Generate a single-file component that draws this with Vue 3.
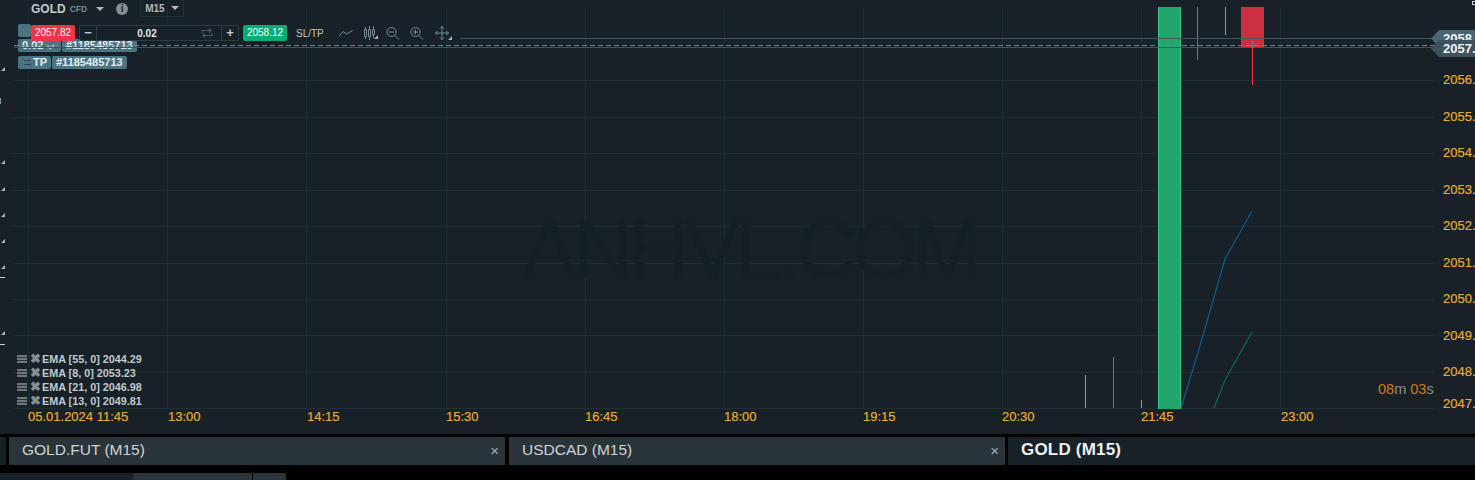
<template>
  <div class="page">
    <div class="chart">
      <svg class="plot" width="1475" height="434" viewBox="0 0 1475 434">
        <g class="grid">
          <line v-for="x in gridX" :key="x" :x1="x + 0.5" y1="7" :x2="x + 0.5" y2="408" />
          <line v-for="y in gridY" :key="y" x1="12" :y1="y + 0.5" x2="1434" :y2="y + 0.5" />
        </g>
        <rect x="1158" y="7" width="23" height="402" fill="#24a56d" />
        <path d="M1158.5 7V409M1180.5 7V409" stroke="#2dcb85" fill="none" />
        <rect x="1241" y="7" width="23" height="41" fill="#cc3040" />
        <path d="M1197.5 7V60" stroke="#e5414f" />
        <path d="M1225.5 7V35" stroke="#3cc88c" />
        <path d="M1252.5 48V85" stroke="#f0313f" />
        <path d="M1085.5 375V408" stroke="#3cc88c" />
        <path d="M1113.5 357V408" stroke="#e5414f" />
        <path d="M1141.5 400V408" stroke="#3cc88c" />
        <path d="M1181 408L1197 356L1225 259L1252 211" stroke="#0f5b96" stroke-width="1.2" fill="none" />
        <path d="M1214 408L1225 380L1252 332" stroke="#0d6b50" stroke-width="1.2" fill="none" />
        <path class="tri" d="M5 67v4h-4zM5 160v4h-4zM5 187v4h-4zM5 213v4h-4zM5 239v4h-4zM5 265v4h-4zM5 331v4h-4zM378 35v4h-4zM452 36v4h-4z" />
        <path class="tick" d="M0 277.500h5M0 344.500h5" />
        <rect x="0" y="98" width="1" height="6" fill="#7f98a3" />
        <rect x="1472.500" y="1.500" width="3" height="3" fill="none" stroke="#c9d0d4" />
      </svg>

      <div class="order-tags">
        <div class="tag-row first-row">
          <span class="tag stub"></span>
        </div>
        <div class="tag-row">
          <span class="tag lots">0.02 ⌵</span><span class="tag">#1185485713</span>
        </div>
        <div class="tag-row last-row">
          <span class="tag tp"><i class="lines"></i>TP</span><span class="tag">#1185485713</span>
        </div>
      </div>

      <svg class="levels" width="1475" height="60" viewBox="0 0 1475 60">
        <path d="M460 38.500H1434M14 47.500H1434" stroke="#43565f" fill="none" />
        <path d="M14 45.500H1434" stroke="#71838c" stroke-dasharray="5 3" fill="none" />
        <rect x="1251" y="41" width="3" height="7" fill="#5b7683" />
      </svg>

      <div class="toolbar">
        <span class="symbol">GOLD</span>
        <span class="cfd">CFD</span>
        <span class="caret"></span>
        <span class="info">i</span>
        <span class="period">M15 <span class="caret small"></span></span>
      </div>

      <div class="trade-row">
        <span class="price sell">2057.82</span>
        <div class="lot">
          <span class="lot-btn">−</span>
          <span class="lot-value">0.02</span>
          <svg class="swap" width="12" height="10" viewBox="0 0 12 10">
            <path d="M1 5V2.500h9M8 .500l2 2-2 2M11 5v2.500H2M4 5.500l-2 2 2 2" />
          </svg>
          <span class="lot-btn plus">+</span>
        </div>
        <span class="price buy">2058.12</span>
        <span class="sltp">SL/TP</span>
        <div class="tools">
          <svg width="14" height="9" viewBox="0 0 14 9"><path d="M0 7.500L4 2.500L7.500 5L13.500 1.500" /></svg>
          <svg width="13" height="14" viewBox="0 0 13 14"><path d="M2.500 1v2M2.500 11v2M6.500 0v3M6.500 11v3M10.500 0v3M10.500 9v3M1.500 3.500h2v7h-2zM5.500 3.500h2v7h-2zM9.500 3.500h2v5h-2z" /></svg>
          <svg width="14" height="13" viewBox="0 0 14 13"><circle cx="5.500" cy="5" r="4.500" /><path d="M3 5h5M9 8.500L13 12.500" /></svg>
          <svg width="14" height="13" viewBox="0 0 14 13"><circle cx="5.500" cy="5" r="4.500" /><path d="M3 5h5M5.500 2.500v5M9 8.500L13 12.500" /></svg>
          <svg class="move" width="14" height="14" viewBox="0 0 14 14"><path d="M7 .500v13M.500 7h13M5 2.500L7 .500 9 2.500M5 11.500L7 13.500 9 11.500M2.500 5L.500 7 2.500 9M11.500 5L13.500 7 11.500 9" /></svg>
        </div>
      </div>

      <div class="legend">
        <div v-for="e in emas" :key="e" class="legend-row">
          <i class="bars"></i><b class="cross">✖</b><span>{{ e }}</span>
        </div>
      </div>

      <div class="wm">ANHVL.COM</div>

      <div class="price-axis">
        <span v-for="p in axisPrices" :key="p.t" class="axis-label" :style="{ top: p.y + 'px' }">{{ p.t }}</span>
      </div>
      <div class="flag back"><span>2058.</span></div>
      <div class="flag"><span>2057.</span></div>

      <div class="time-axis">
        <span v-for="t in axisTimes" :key="t.t" class="time-label" :style="{ left: t.x + 'px' }">{{ t.t }}</span>
      </div>

      <div class="countdown"><em>08</em>m <em>03</em>s</div>
    </div>

    <div class="tabs">
      <div class="tab-stub"></div>
      <div class="tab first">GOLD.FUT (M15)<span class="close">×</span></div>
      <div class="tab second">USDCAD (M15)<span class="close">×</span></div>
      <div class="tab active">GOLD (M15)</div>
    </div>

    <div class="bottom">
      <div class="b-one"></div>
      <div class="b-two"></div>
      <div class="b-three"></div>
    </div>
  </div>
</template>

<script setup>
const gridX = [28, 167, 306, 446, 585, 724, 863, 1002, 1141, 1280]
const gridY = [80, 117, 153, 190, 226, 263, 299, 335, 372, 408]

const axisPrices = [
  { t: '2056.', y: 73 },
  { t: '2055.', y: 110 },
  { t: '2054.', y: 146 },
  { t: '2053.', y: 183 },
  { t: '2052.', y: 219 },
  { t: '2051.', y: 256 },
  { t: '2050.', y: 292 },
  { t: '2049.', y: 329 },
  { t: '2048.', y: 365 },
  { t: '2047.', y: 397 }
]

const axisTimes = [
  { t: '05.01.2024 11:45', x: 28 },
  { t: '13:00', x: 168 },
  { t: '14:15', x: 307 },
  { t: '15:30', x: 446 },
  { t: '16:45', x: 585 },
  { t: '18:00', x: 724 },
  { t: '19:15', x: 863 },
  { t: '20:30', x: 1002 },
  { t: '21:45', x: 1141 },
  { t: '23:00', x: 1281 }
]

const emas = [
  'EMA [55, 0] 2044.29',
  'EMA [8, 0] 2053.23',
  'EMA [21, 0] 2046.98',
  'EMA [13, 0] 2049.81'
]
</script>

<style>
html, body {
  margin: 0;
  background: #000;
  overflow: hidden;
}
</style>

<style scoped>
.page {
  width: 1475px;
  height: 480px;
  background: #000;
  font-family: "Liberation Sans", Arial, sans-serif;
  display: flex;
  flex-direction: column;
  overflow: hidden;
}

.chart {
  position: relative;
  height: 434px;
  background: #172127;
  flex: none;
  overflow: hidden;
}

.plot,
.levels {
  position: absolute;
  left: 0;
  top: 0;
}

.grid line {
  stroke: #212d33;
  stroke-width: 1;
}

.tick {
  stroke: #c9d0d4;
  fill: none;
}

.tri {
  fill: #aab4b9;
}

.toolbar {
  position: absolute;
  left: 31px;
  top: 0;
  height: 17px;
  display: flex;
  align-items: center;
  color: #b9bfc2;
}

.symbol {
  font-size: 12px;
  font-weight: 700;
  color: #c5cacc;
}

.cfd {
  font-size: 8.500px;
  font-weight: 700;
  color: #7f8a90;
  margin-left: 4px;
}

.caret {
  width: 0;
  height: 0;
  border-left: 4px solid transparent;
  border-right: 4px solid transparent;
  border-top: 4px solid #b4babd;
  margin-left: 9px;
}

.info {
  width: 12px;
  height: 12px;
  border-radius: 50%;
  background: #8a8f92;
  color: #172127;
  font-size: 10px;
  font-weight: 700;
  line-height: 12px;
  text-align: center;
  margin-left: 12px;
}

.period {
  margin-left: 12px;
  width: 44px;
  height: 17px;
  box-sizing: border-box;
  border: 1px solid #232f35;
  border-top: none;
  font-size: 10px;
  font-weight: 700;
  display: flex;
  align-items: center;
  padding-left: 4px;
  color: #b4babd;
}

.period .caret {
  margin-left: 6px;
}

.trade-row {
  position: absolute;
  left: 31px;
  top: 25px;
  height: 16px;
  display: flex;
  align-items: center;
}

.price {
  width: 44px;
  height: 16px;
  border-radius: 2px;
  color: #fff;
  font-size: 10px;
  line-height: 16px;
  text-align: center;
}

.sell {
  background: #f2334a;
}

.buy {
  background: #08ad73;
  margin-left: 4px;
}

.lot {
  width: 160px;
  height: 16px;
  margin-left: 4px;
  box-sizing: border-box;
  border: 1px solid #2f3c43;
  border-radius: 2px;
  background: #172127;
  display: flex;
  align-items: center;
  position: relative;
}

.lot-btn {
  width: 16px;
  text-align: center;
  color: #c9ced1;
  font-size: 13px;
  font-weight: 700;
  line-height: 14px;
  border-right: 1px solid #2f3c43;
}

.lot-btn.plus {
  border-right: none;
  border-left: 1px solid #2f3c43;
  position: absolute;
  right: 0;
}

.lot-value {
  flex: none;
  width: 100px;
  text-align: center;
  color: #e6e9ea;
  font-size: 10px;
  font-weight: 700;
}

.swap {
  margin-left: 4px;
}

.swap path {
  fill: none;
  stroke: #4c585e;
  stroke-width: 1.200;
}

.sltp {
  margin-left: 9px;
  color: #c0c6c9;
  font-size: 10px;
}

.tools {
  display: flex;
  align-items: center;
  margin-left: 15px;
  gap: 10px;
}

.tools svg {
  fill: none;
  stroke: #7d8d95;
  stroke-width: 1;
  flex: none;
}

.tools .move {
  margin-left: 1px;
}

.order-tags {
  position: absolute;
  left: 18px;
  top: 24px;
  display: flex;
  flex-direction: column;
  gap: 2px;
}

.tag-row {
  display: flex;
  gap: 1px;
  height: 13px;
}

.last-row {
  margin-top: 2px;
}

.tag {
  background: #4b7482;
  color: #e4ecef;
  font-size: 11px;
  font-weight: 700;
  line-height: 13px;
  height: 13px;
  border-radius: 2px;
  padding: 0 4px;
  display: flex;
  align-items: center;
}

.tag.stub {
  width: 13px;
  padding: 0;
}

.tag.lots {
  width: 43px;
  box-sizing: border-box;
  white-space: nowrap;
  overflow: hidden;
}

.tag.tp {
  width: 33px;
  box-sizing: border-box;
  padding-left: 6px;
}

.lines {
  flex: none;
  width: 7px;
  height: 3px;
  margin-right: 2px;
  border-top: 1px solid #2f4854;
  border-bottom: 1px solid #2f4854;
}

.legend {
  position: absolute;
  left: 17px;
  top: 352px;
}

.legend-row {
  height: 14px;
  display: flex;
  align-items: center;
  color: #c4c9cc;
  font-size: 10.800px;
  font-weight: 700;
}

.bars {
  width: 10px;
  height: 8px;
  background: repeating-linear-gradient(#6f777b 0 2px, #2a3439 2px 3px);
  margin-right: 3px;
}

.cross {
  color: #878e92;
  font-size: 13px;
  line-height: 14px;
  margin-right: 3px;
  width: 9px;
}

.wm {
  position: absolute;
  left: 522px;
  top: 207px;
  font-size: 83px;
  line-height: 86px;
  color: #151f25;
  white-space: nowrap;
  letter-spacing: -4.200px;
}

.axis-label {
  position: absolute;
  left: 1443px;
  color: #e8ad2c;
  font-size: 13px;
  line-height: 14px;
  -webkit-text-stroke: 0.2px #e8ad2c;
}

.flag {
  position: absolute;
  left: 1431px;
  top: 40px;
  width: 44px;
  height: 17px;
  background: #3f525c;
  clip-path: polygon(8px 0, 100% 0, 100% 100%, 8px 100%, 0 50%);
  color: #f0f3f4;
  font-size: 13px;
  font-weight: 700;
  line-height: 17px;
  padding-left: 12px;
  box-sizing: border-box;
  overflow: hidden;
}

.flag span {
  white-space: nowrap;
}

.flag.back {
  top: 30px;
  background: #4a6471;
}

.time-label {
  position: absolute;
  top: 410px;
  color: #e8ad2c;
  font-size: 13px;
  line-height: 14px;
  white-space: nowrap;
  -webkit-text-stroke: 0.2px #e8ad2c;
}

.countdown {
  position: absolute;
  left: 1378px;
  top: 381px;
  font-size: 14.500px;
  line-height: 16px;
  color: #8c9092;
}

.countdown em {
  font-style: normal;
  color: #d07a0c;
}

.tabs {
  margin-top: 3px;
  height: 28px;
  display: flex;
  flex: none;
}

.tab-stub {
  width: 6px;
  background: #172127;
  margin-right: 3px;
}

.tab {
  position: relative;
  height: 28px;
  line-height: 26px;
  box-sizing: border-box;
  padding-left: 13px;
  background: #2a353b;
  color: #ced3d6;
  font-size: 15.500px;
}

.tab.first {
  width: 496px;
  margin-right: 4px;
}

.tab.second {
  width: 496px;
}

.tab.active {
  margin-left: 3px;
  flex: 1;
  background: #172127;
  color: #eceff0;
  font-weight: 700;
  font-size: 17px;
  letter-spacing: 0.2px;
}

.close {
  position: absolute;
  right: 6px;
  top: 1px;
  color: #a9afb2;
  font-size: 15px;
}

.bottom {
  margin-top: 8px;
  height: 7px;
  display: flex;
  flex: none;
}

.b-one {
  width: 133px;
  background: #172127;
}

.b-two {
  width: 119px;
  background: #2a353b;
  margin-right: 1px;
}

.b-three {
  width: 33px;
  background: #2a353b;
}
</style>
